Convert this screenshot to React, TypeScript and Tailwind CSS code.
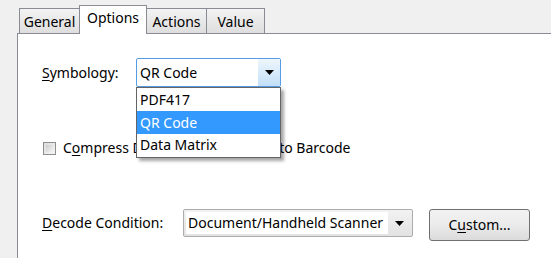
import React from "react";

const font = { fontFamily: '"Noto Sans", "Open Sans", sans-serif' };

function Arrow() {
  return (
    <svg width="9" height="5" viewBox="0 0 9 5">
      <path d="M0 0 H9 L4.5 5 Z" fill="#000" />
    </svg>
  );
}

export default function App() {
  return (
    <div
      className="w-[551px] h-[258px] bg-[#f0f0f0] overflow-hidden flex flex-col text-[14px] text-black leading-none"
      style={font}
    >
      {/* tabs */}
      <div className="flex items-end pl-[19px] h-[33px] relative z-10">
        <div className="w-[61px] h-[25px] border border-b-0 border-[#898c95] bg-gradient-to-b from-[#f3f3f3] to-[#dedede] flex items-center justify-center pt-[1px]">
          General
        </div>
        <div className="w-[68px] h-[29px] -mb-px border border-b-0 border-[#898c95] bg-white flex items-start pt-[5px] justify-center -mx-px relative">
          Options
        </div>
        <div className="w-[61px] h-[25px] border border-b-0 border-[#898c95] bg-gradient-to-b from-[#f3f3f3] to-[#dedede] flex items-center justify-center pt-[1px]">
          Actions
        </div>
        <div className="w-[58px] h-[25px] border border-b-0 border-l-0 border-[#898c95] bg-gradient-to-b from-[#f3f3f3] to-[#dedede] flex items-center justify-center pt-[1px]">
          Value
        </div>
      </div>

      {/* panel */}
      <div className="ml-[17px] flex-1 border-l border-t border-[#898c95] bg-white pl-[24px] pt-[24px]">
        {/* symbology */}
        <div className="flex items-center h-[29px]">
          <span className="w-[94px]">
            <span className="underline underline-offset-2">S</span>ymbology:
          </span>
          <div className="relative">
            <div className="w-[145px] h-[29px] border border-[#569de5] rounded-[2px] flex bg-white">
              <div className="flex-1 flex items-center pl-[3px]">QR Code</div>
              <div className="w-[22px] flex items-center justify-center bg-gradient-to-b from-[#eef6fd] to-[#c2dff7]">
                <Arrow />
              </div>
            </div>
            {/* dropdown list */}
            <div className="absolute left-0 top-[29px] w-[145px] border border-[#646464] bg-white shadow-[3px_3px_3px_rgba(0,0,0,0.35)] py-[1px] z-20">
              <div className="h-[22px] flex items-center pl-[3px]">PDF417</div>
              <div className="h-[23px] flex items-center pl-[3px] bg-[#3399ff] text-white">QR Code</div>
              <div className="h-[22px] flex items-center pl-[3px]">Data Matrix</div>
            </div>
          </div>
        </div>

        {/* checkbox */}
        <div className="flex items-center h-[20px] mt-[51px]">
          <div className="w-[13px] h-[13px] ml-[1px] border border-[#8e8f8f] bg-gradient-to-br from-[#dcdcdc] to-[#f6f6f6] p-[2px]">
            <div className="w-full h-full bg-gradient-to-br from-[#cfcfcf] to-[#f2f2f2]" />
          </div>
          <span className="ml-[7px]">
            C<span className="underline underline-offset-2">o</span>mpress Data Before Encoding to Barcode
          </span>
        </div>

        {/* decode condition */}
        <div className="flex items-start mt-[51px]">
          <div className="h-[28px] flex items-center w-[141px]">
            <span>
              <span className="underline underline-offset-2">D</span>ecode Condition:
            </span>
          </div>
          <div className="w-[230px] h-[28px] border border-[#acacac] rounded-[2px] flex bg-gradient-to-b from-[#f2f2f2] to-[#e2e2e2] p-[2px]">
            <div className="flex-1 bg-white flex items-center pl-[2px] whitespace-nowrap overflow-hidden">
              Document/Handheld Scanner
            </div>
            <div className="w-[22px] flex items-center justify-center">
              <Arrow />
            </div>
          </div>
          <div className="ml-[16px] w-[101px] h-[32px] border border-[#707070] rounded-[3px] bg-gradient-to-b from-[#f2f2f2] via-[#ebebeb] to-[#dbdbdb] flex items-center justify-center">
            <span>
              C<span className="underline underline-offset-2">u</span>stom...
            </span>
          </div>
        </div>
      </div>
    </div>
  );
}
